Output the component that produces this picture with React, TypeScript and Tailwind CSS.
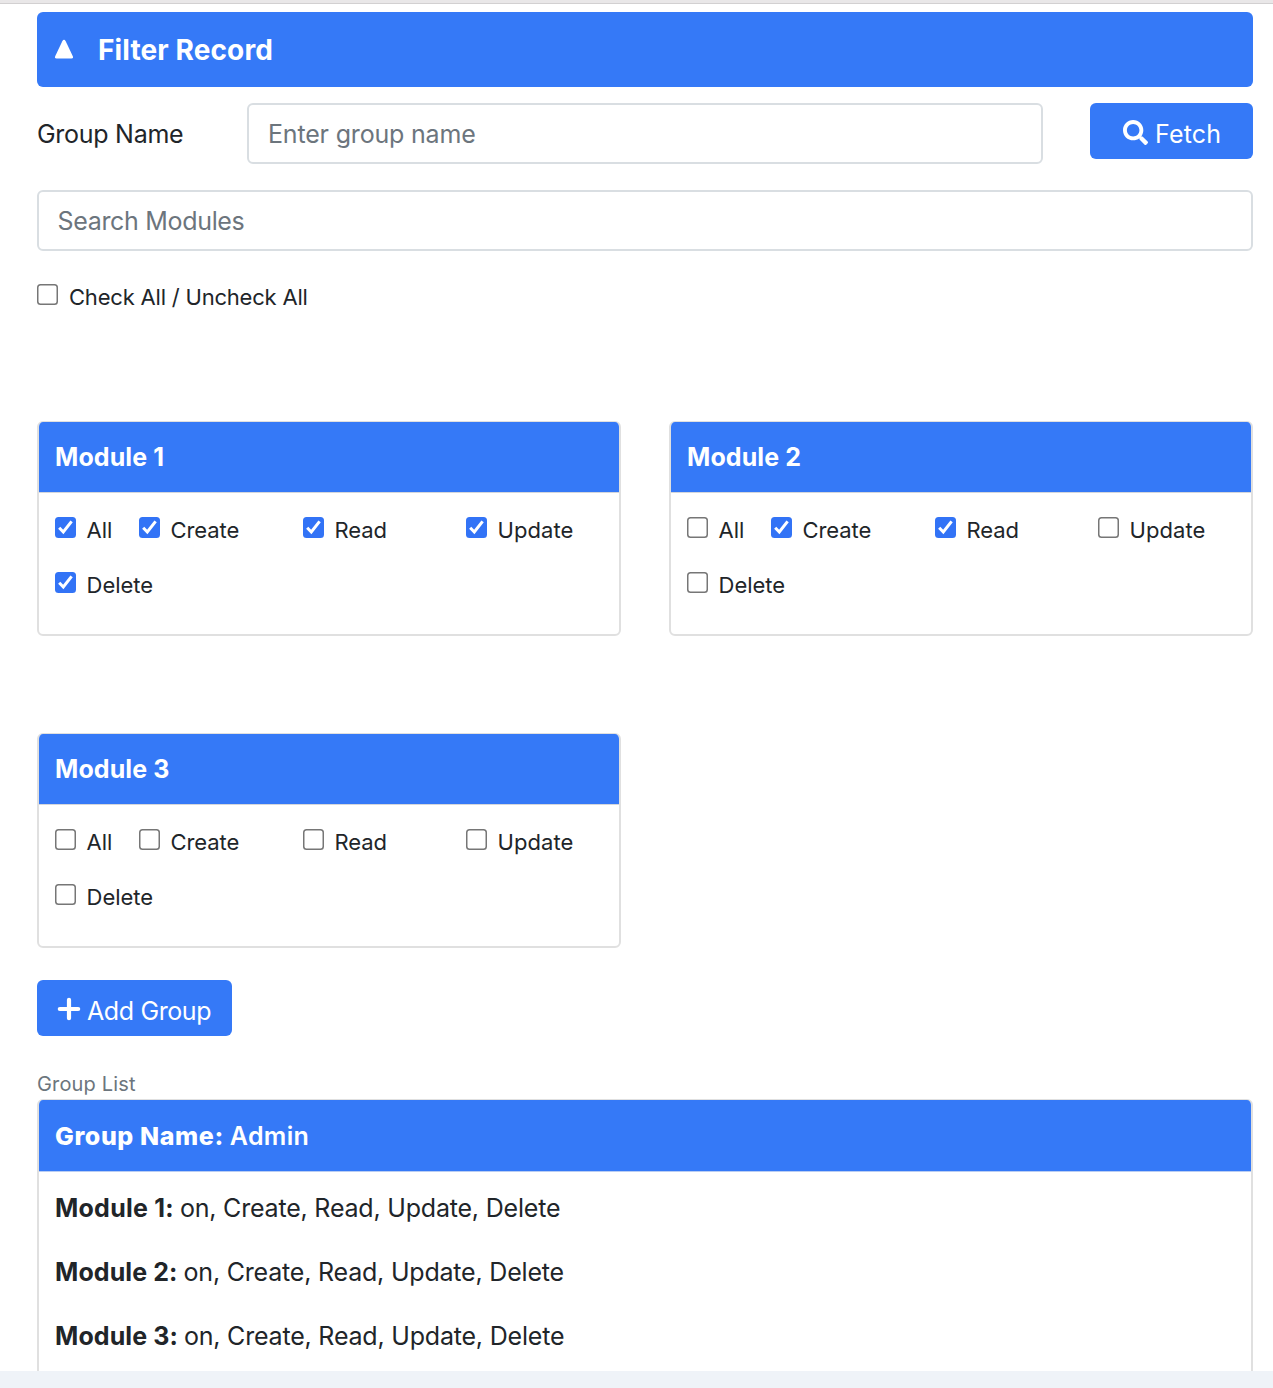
import React, { useState } from 'react';
import { FaSearch } from 'react-icons/fa';

const ACTIONS = ['All', 'Create', 'Read', 'Update', 'Delete'];

const COLUMN: Record<string, string> = {
  All: 'w-[84px]',
  Create: 'w-[164px]',
  Read: 'w-[163px]',
  Update: 'w-[130px]',
  Delete: 'w-[130px]',
};

const LABEL_SPACING: Record<string, string> = {
  All: 'tracking-[0px]',
  Create: 'tracking-[-0.08px]',
  Read: 'tracking-[-0.05px]',
  Update: 'tracking-[0.08px]',
  Delete: 'tracking-[0px]',
};

const GROUP_MODULES = [
  { name: 'Module 1:', tracking: 'tracking-[0.25px]' },
  { name: 'Module 2:', tracking: 'tracking-[0.1px]' },
  { name: 'Module 3:', tracking: 'tracking-[0.1px]' },
];

function Checkbox({ checked, onChange }: { checked: boolean; onChange: () => void }) {
  return (
    <span className="grid size-[21px] shrink-0">
      <input
        type="checkbox"
        checked={checked}
        onChange={onChange}
        className="col-start-1 row-start-1 size-[21px] appearance-none rounded-[3.5px] bg-white shadow-[inset_0_0_0_1.5px_#767676] checked:bg-[#3273f6] checked:shadow-none"
      />
      {checked && (
        <svg
          viewBox="0 0 21 21"
          className="pointer-events-none col-start-1 row-start-1 size-[21px]"
          fill="none"
          stroke="white"
          strokeWidth="3"
        >
          <path d="M4.2 10.8 L8.3 15 L16.6 4.4" />
        </svg>
      )}
    </span>
  );
}

function ModuleCard({ name, initial }: { name: string; initial: string[] }) {
  const [selected, setSelected] = useState<string[]>(initial);
  const toggle = (action: string) =>
    setSelected((current) =>
      current.includes(action) ? current.filter((a) => a !== action) : [...current, action],
    );

  return (
    <section className="h-[215px] w-[584px] overflow-hidden rounded-[6px] border-2 border-t border-[#e0e0e0] bg-white">
      <h2 className="flex h-[71px] items-center border-b border-[#d3d6dc] bg-[#3579f7] pl-4 pt-[2px] text-[25px] font-bold tracking-[0.1px] text-white">
        {name}
      </h2>
      <div className="flex flex-wrap pl-[15.5px] pt-[22px]">
        {ACTIONS.map((action) => (
          <label key={action} className={`flex h-[55px] shrink-0 items-start ${COLUMN[action]}`}>
            <span className="mt-[2px] flex">
              <Checkbox checked={selected.includes(action)} onChange={() => toggle(action)} />
            </span>
            <span className={`ml-[11px] text-[22px] leading-[30px] ${LABEL_SPACING[action]}`}>{action}</span>
          </label>
        ))}
      </div>
    </section>
  );
}

export default function App() {
  const [allChecked, setAllChecked] = useState(false);

  return (
    <div className="flex h-[1388px] w-[1273px] flex-col overflow-hidden bg-white font-['Inter',sans-serif] text-[25px] text-[#212529]">
      <div className="h-1 shrink-0 border-b border-[#d2d0d1] bg-[#e9e7e8]" />

      <main className="flex h-[1367px] flex-col overflow-hidden pl-[37px] pr-5 pt-2">
        <header className="flex h-[75px] shrink-0 items-center rounded-[6px] bg-[#3579f7] pl-[17px] text-white">
          <svg viewBox="0 0 20 20" className="mb-[1px] size-5" fill="white">
            <path d="M8.3 2.2 Q10 -0.6 11.7 2.2 L18.8 17.3 Q19.5 19.4 17.4 19.4 H2.6 Q0.5 19.4 1.2 17.3 Z" />
          </svg>
          <h1 className="ml-6 text-[28px] font-bold tracking-[0.12px]">Filter Record</h1>
        </header>

        <form className="mt-4 flex shrink-0 items-start" onSubmit={(e) => e.preventDefault()}>
          <label className="w-[210px] leading-[62px] tracking-[-0.28px]">Group Name</label>
          <input
            placeholder="Enter group name"
            className="h-[61px] w-[796px] rounded-[6px] border-2 border-[#d9dee2] pl-[19px] tracking-[-0.18px] placeholder:text-[#6c757d]"
          />
          <button className="ml-[47px] flex h-14 w-[163px] items-center rounded-[6px] bg-[#3579f7] pl-[33px] pt-[7px] text-white">
            <FaSearch className="mb-1 size-[25px]" />
            <span className="ml-[7px] tracking-[0.15px]">Fetch</span>
          </button>
        </form>

        <input
          placeholder="Search Modules"
          className="mt-[25px] h-[61px] w-[1216px] shrink-0 rounded-[6px] border-2 border-[#d9dee2] pl-[18.5px] tracking-[-0.32px] placeholder:text-[#6c757d]"
        />

        <label className="mt-[31px] flex h-[30px] shrink-0 items-start">
          <span className="mt-[2px] flex">
            <Checkbox checked={allChecked} onChange={() => setAllChecked(!allChecked)} />
          </span>
          <span className="ml-[11px] text-[22px] leading-[30px] tracking-[-0.2px]">Check All / Uncheck All</span>
        </label>

        <div className="mt-[109px] flex shrink-0 flex-wrap gap-x-12 gap-y-[97px]">
          <ModuleCard name="Module 1" initial={ACTIONS} />
          <ModuleCard name="Module 2" initial={['Create', 'Read']} />
          <ModuleCard name="Module 3" initial={[]} />
        </div>

        <button className="mt-8 flex h-14 w-[195px] shrink-0 items-center rounded-[6px] bg-[#3579f7] pl-5 pt-[7px] text-white">
          <svg viewBox="0 0 24 24" className="mb-[6px] size-6" fill="none" stroke="white" strokeWidth="4.2" strokeLinecap="round">
            <path d="M12 2.8 V21.2 M2.8 12 H21.2" />
          </svg>
          <span className="ml-[6px] tracking-[-0.38px]">Add Group</span>
        </button>

        <p className="mt-[33px] h-[30px] shrink-0 text-[20px] leading-[30px] tracking-[0.16px] text-[#6c757d]">Group List</p>

        <section className="h-[280px] shrink-0 overflow-hidden rounded-t-[6px] border-x-2 border-t border-[#e0e0e0]">
          <h2 className="flex h-[72px] items-center border-b border-[#b9cdf3] bg-[#3579f7] pl-4 pt-[2px] text-white">
            <span className="font-extrabold tracking-[0.6px]">Group Name:</span>
            <span className="ml-[6px] font-semibold tracking-[0.3px]">Admin</span>
          </h2>
          <div className="flex flex-col gap-6 pl-4 pt-[17px]">
            {GROUP_MODULES.map(({ name, tracking }) => (
              <p key={name} className="flex h-10 items-center">
                <strong className={`font-bold ${tracking}`}>{name}</strong>
                <span className="ml-[6px] tracking-[-0.2px]">on, Create, Read, Update, Delete</span>
              </p>
            ))}
          </div>
        </section>
      </main>

      <footer className="h-[17px] shrink-0 bg-[#eff3f8]" />
    </div>
  );
}
